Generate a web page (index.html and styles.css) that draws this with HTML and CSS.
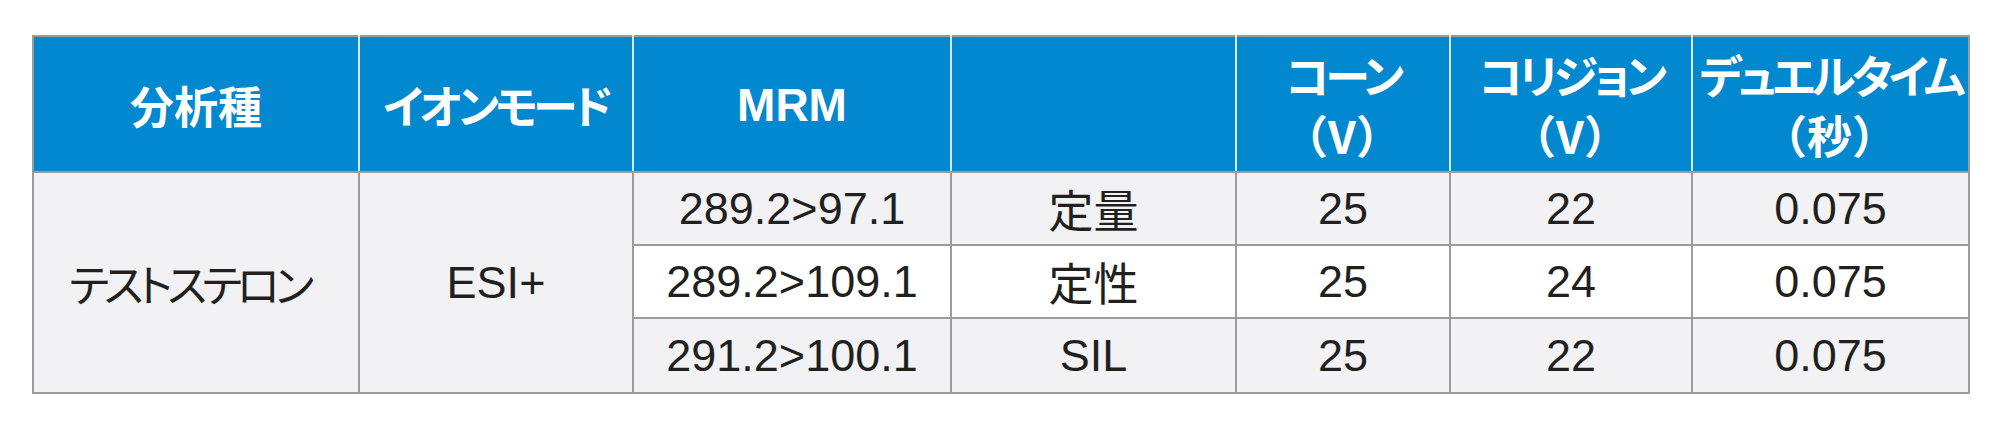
FILE: index.html
```html
<!DOCTYPE html>
<html lang="ja">
<head>
<meta charset="utf-8">
<title>MRM条件</title>
<link rel="stylesheet" href="styles.css">
</head>
<body>
<table class="mrm">
  <colgroup>
    <col class="c1"><col class="c2"><col class="c3"><col class="c4"><col class="c5"><col class="c6"><col class="c7">
  </colgroup>
  <thead>
    <tr class="head">
      <th class="kanji">分析種</th>
      <th>イオンモード</th>
      <th class="latin">MRM</th>
      <th></th>
      <th>コーン<br><span class="unit">（V）</span></th>
      <th>コリジョン<br><span class="unit">（V）</span></th>
      <th>デュエルタイム<br><span class="unit">（秒）</span></th>
    </tr>
  </thead>
  <tbody>
    <tr class="r1 gray">
      <td rowspan="3" class="jp">テストステロン</td>
      <td rowspan="3">ESI+</td>
      <td>289.2&gt;97.1</td>
      <td class="jpk">定量</td>
      <td>25</td>
      <td>22</td>
      <td>0.075</td>
    </tr>
    <tr class="r2 white">
      <td>289.2&gt;109.1</td>
      <td class="jpk">定性</td>
      <td>25</td>
      <td>24</td>
      <td>0.075</td>
    </tr>
    <tr class="r3 gray">
      <td>291.2&gt;100.1</td>
      <td>SIL</td>
      <td>25</td>
      <td>22</td>
      <td>0.075</td>
    </tr>
  </tbody>
</table>
</body>
</html>
```
FILE: styles.css
```css
html, body {
  margin: 0;
  padding: 0;
  background: #ffffff;
}
body {
  padding: 35px 32px 0 32px;
  font-family: "Liberation Sans", "Noto Sans CJK JP", sans-serif;
}
.mrm {
  border-collapse: collapse;
  table-layout: fixed;
  width: 1936px;
  border: 2px solid #9c9c9c;
  font-feature-settings: "palt";
}
.c1 { width: 326px; }
.c2 { width: 274px; }
.c3 { width: 318px; }
.c4 { width: 285px; }
.c5 { width: 214px; }
.c6 { width: 242px; }
.c7 { width: 277px; }

.head th {
  height: 136px;
  padding: 2px 0 0 0;
  background: #0288cf;
  color: #ffffff;
  font-family: "Noto Sans CJK JP", sans-serif;
  font-weight: 700;
  font-size: 45px;
  line-height: 60px;
  letter-spacing: -4px;
  text-align: center;
  vertical-align: middle;
  white-space: nowrap;
  border-left: 2px solid #d6ebf7;
  border-right: 2px solid #d6ebf7;
  border-bottom: 2px solid #9c9c9c;
  box-sizing: border-box;
}
.head th .unit {
  letter-spacing: 2px;
}
.head th.kanji {
  letter-spacing: 0;
  font-size: 44px;
}
.head th.latin {
  font-family: "Liberation Sans", sans-serif;
  font-size: 46px;
  letter-spacing: 0;
}
.head th:first-child { border-left: 2px solid #9c9c9c; }
.head th:last-child { border-right: 2px solid #9c9c9c; }

tbody td {
  padding: 0;
  text-align: center;
  vertical-align: middle;
  font-size: 45px;
  color: #221f1f;
  border: 2px solid #9c9c9c;
  white-space: nowrap;
  background: #f2f2f4;
}
tbody td.jp {
  font-family: "Noto Sans CJK JP", sans-serif;
  font-size: 44px;
  letter-spacing: -5px;
  padding-right: 14px;
}
tbody td.jpk {
  font-family: "Noto Sans CJK JP", sans-serif;
  font-size: 45px;
}
.r1 td { height: 71px; }
.r2 td { height: 71px; }
.r3 td { height: 73px; }
.white td { background: #ffffff; }
.gray td { background: #f2f2f4; }
```
